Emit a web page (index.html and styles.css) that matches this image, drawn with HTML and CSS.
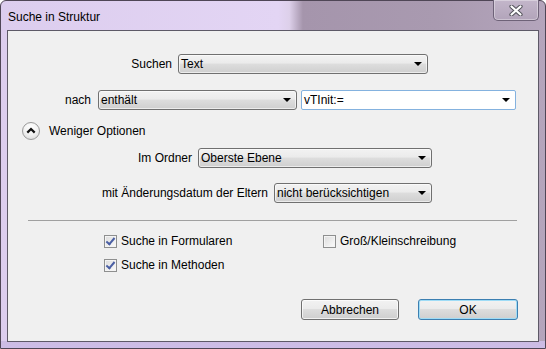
FILE: index.html
```html
<!DOCTYPE html>
<html lang="de">
<head>
	<meta charset="UTF-8">
	<title>Suche in Struktur</title>
	<link rel="stylesheet" href="styles.css">
</head>
<body>
	<div class="window">
		<div class="titlebar">
			<span class="title">Suche in Struktur</span>
			<div class="close">
				<svg width="14" height="11" viewBox="0 0 14 11">
					<path d="M2.5 1.5 L11.5 9.5 M11.5 1.5 L2.5 9.5" stroke="#55545c" stroke-width="4.2" stroke-linecap="round"/>
					<path d="M2.5 1.5 L11.5 9.5 M11.5 1.5 L2.5 9.5" stroke="#fff" stroke-width="2.2" stroke-linecap="round"/>
				</svg>
			</div>
		</div>
		<div class="client">
			<div class="row row-search">
				<span class="lbl l-search">Suchen</span>
				<div class="select w-search"><span>Text</span><i class="arrow"></i></div>
			</div>
			<div class="row row-nach">
				<span class="lbl l-nach">nach</span>
				<div class="select w-nach"><span>enthält</span><i class="arrow"></i></div>
				<div class="combo"><span>vTInit:=</span><i class="arrow"></i></div>
			</div>
			<div class="row row-toggle">
				<div class="roundbtn">
					<svg width="10" height="7" viewBox="0 0 10 7">
						<path d="M1.3 5.6 L5 2 L8.7 5.6" fill="none" stroke="#111" stroke-width="2.2"/>
					</svg>
				</div>
				<span>Weniger Optionen</span>
			</div>
			<div class="row row-ordner">
				<span class="lbl l-ordner">Im Ordner</span>
				<div class="select w-ordner"><span>Oberste Ebene</span><i class="arrow"></i></div>
			</div>
			<div class="row row-datum">
				<span class="lbl l-datum">mit Änderungsdatum der Eltern</span>
				<div class="select w-datum"><span>nicht berücksichtigen</span><i class="arrow"></i></div>
			</div>
			<div class="sep"></div>
			<div class="opts">
				<label class="check"><i class="box on"></i>Suche in Formularen</label>
				<label class="check"><i class="box"></i>Groß/Kleinschreibung</label>
				<label class="check"><i class="box on"></i>Suche in Methoden</label>
			</div>
			<div class="buttons">
				<div class="btn">Abbrechen</div>
				<div class="btn default">OK</div>
			</div>
		</div>
	</div>
</body>
</html>
```
FILE: styles.css
```css
* {
	margin: 0;
	padding: 0;
	box-sizing: border-box;
}
body {
	font-family: "Liberation Sans", Arial, sans-serif;
	font-size: 12px;
	color: #000;
	background: #fff;
}
.window {
	width: 546px;
	height: 349px;
	border: 1px solid #4f4656;
	border-radius: 6px 6px 0 0;
	padding: 0 6px 6px 6px;
	display: flex;
	flex-direction: column;
	background:
		linear-gradient(#cbbbe3, #cdbde6) bottom / 100% 7px no-repeat,
		linear-gradient(to right, #dccdee 0%, #e3d5f4 51%, #ddd0ea 53%, #a595ac 55.5%, #a99ab0 80%, #b4a5bc 100%);
	position: relative;
}
.titlebar {
	height: 29px;
	display: flex;
	align-items: center;
	padding-left: 1px;
	padding-top: 2px;
}
.title {
	font-size: 12px;
	color: #000;
}
.close {
	position: absolute;
	top: -1px;
	right: 6px;
	width: 46px;
	height: 21px;
	border: 1px solid #6e6278;
	border-top: none;
	border-radius: 0 0 5px 5px;
	background: linear-gradient(#c3b6ca, #b2a4ba);
	box-shadow: inset 0 0 0 1px rgba(255,255,255,0.35);
	display: flex;
	align-items: center;
	justify-content: center;
}
.client {
	flex: 1;
	border: 1px solid #5d5967;
	background: #f0f0f0;
	display: flex;
	flex-direction: column;
}
.row {
	display: flex;
	align-items: center;
}
.lbl {
	text-align: right;
	flex-shrink: 0;
}
.select, .combo {
	height: 20px;
	border: 1px solid #707070;
	border-radius: 3px;
	background: linear-gradient(#f2f2f2 0%, #ebebeb 45%, #dddddd 50%, #cfcfcf 100%);
	box-shadow: inset 0 0 0 1px rgba(255,255,255,0.6);
	display: flex;
	align-items: center;
	justify-content: space-between;
	padding: 0 5px 0 2px;
	flex-shrink: 0;
}
.combo {
	background: #fff;
	border-color: #84b2df;
	border-radius: 2px;
	box-shadow: none;
	width: 215px;
	margin-left: 4px;
}
.arrow {
	width: 0;
	height: 0;
	border-left: 4px solid transparent;
	border-right: 4px solid transparent;
	border-top: 4px solid #000;
}
.row-search {
	margin-top: 23px;
}
.l-search {
	width: 164px;
}
.w-search {
	width: 250px;
	margin-left: 6px;
}
.row-nach {
	margin-top: 16px;
}
.l-nach {
	width: 83px;
}
.w-nach {
	width: 199px;
	margin-left: 7px;
}
.row-toggle {
	margin-top: 12px;
	padding-left: 14px;
	gap: 9px;
}
.roundbtn {
	width: 18px;
	height: 18px;
	border-radius: 50%;
	border: 1px solid #9a9a9a;
	background: radial-gradient(circle at 50% 30%, #ffffff 0%, #f2f2f2 50%, #d4d4d4 100%);
	display: flex;
	align-items: center;
	justify-content: center;
	padding-bottom: 1px;
}
.row-ordner {
	margin-top: 8px;
}
.l-ordner {
	width: 184px;
}
.w-ordner {
	width: 234px;
	margin-left: 6px;
}
.row-datum {
	margin-top: 15px;
}
.l-datum {
	width: 260px;
}
.w-datum {
	width: 158px;
	margin-left: 6px;
}
.sep {
	height: 1px;
	background: #a0a0a0;
	margin: 17px 21px 0 20px;
}
.opts {
	display: grid;
	grid-template-columns: 219px auto;
	row-gap: 10px;
	margin: 13px 0 0 96px;
}
.check {
	display: flex;
	align-items: center;
	gap: 4px;
	height: 14px;
}
.box {
	width: 13px;
	height: 13px;
	border: 1px solid #8e8f8f;
	background: linear-gradient(135deg, #dcdcdc, #fbfbfb);
	box-shadow: inset 0 0 0 1px #f4f4f4;
	position: relative;
}
.box.on::after {
	content: "";
	position: absolute;
	left: 3px;
	top: 0px;
	width: 3px;
	height: 7px;
	border-right: 2px solid #4a5fa4;
	border-bottom: 2px solid #4a5fa4;
	transform: rotate(40deg);
}
.buttons {
	display: flex;
	justify-content: flex-end;
	gap: 19px;
	margin-top: 27px;
	padding-right: 20px;
}
.btn {
	width: 98px;
	height: 21px;
	border: 1px solid #707070;
	border-radius: 3px;
	background: linear-gradient(#f2f2f2 0%, #ebebeb 45%, #dddddd 50%, #cfcfcf 100%);
	box-shadow: inset 0 0 0 1px rgba(255,255,255,0.7);
	display: flex;
	align-items: center;
	justify-content: center;
}
.btn.default {
	width: 100px;
	border-color: #3c7fb1;
	box-shadow: inset 0 0 0 1px #9fdcf6;
}
```
